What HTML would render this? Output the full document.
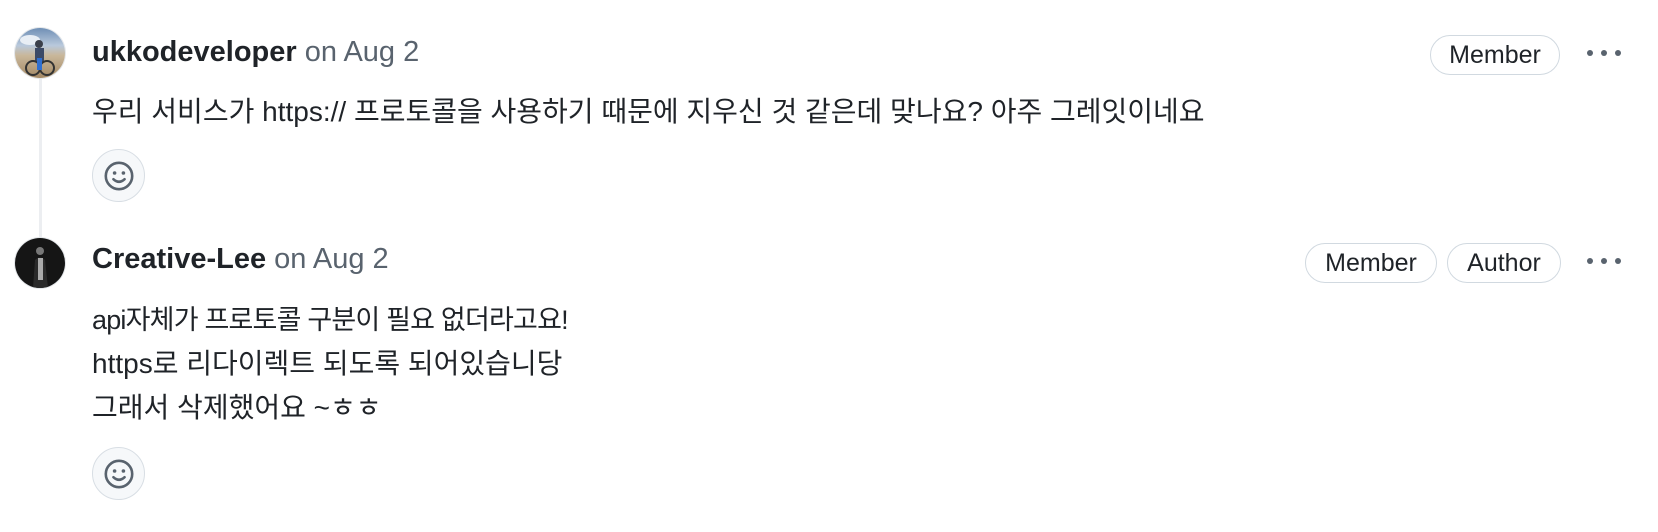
<!DOCTYPE html>
<html><head><meta charset="utf-8"><style>
html,body{margin:0;padding:0;background:#fff;width:1658px;height:532px;overflow:hidden;position:relative;font-family:"Liberation Sans","Noto Sans CJK KR",sans-serif;color:#1f2328}
.line{position:absolute;left:39px;top:79px;width:3px;height:160px;background:#eceef1}
.av{position:absolute;left:15px;width:50px;height:50px;border-radius:50%;overflow:hidden;box-shadow:0 0 0 1px #e4e7ea}
.name{position:absolute;left:92px;font-size:29px;line-height:1;white-space:nowrap}
.name b{font-weight:bold}
.name span{color:#59636e}
.txt{position:absolute;left:92px;font-size:27px;letter-spacing:-0.8px;white-space:nowrap}
.l2{font-size:28px;letter-spacing:0}
.smile{position:absolute;left:92px;width:51px;height:51px;border-radius:50%;border:1px solid #d8dee4;background:#f6f8fa;display:flex;align-items:center;justify-content:center}
.badge{position:absolute;height:38px;border:1px solid #d1d9e0;border-radius:20px;font-size:25px;display:flex;align-items:center;justify-content:center;box-sizing:content-box}
.dots{position:absolute;left:1587px;width:34px;height:6px;display:flex;justify-content:space-between}
.dots i{width:6px;height:6px;border-radius:50%;background:#59636e;display:block}
</style></head><body>
<div class="line"></div>

<div class="av" style="top:28px;background:linear-gradient(#6f8fb5 0%,#b9c9dc 35%,#c9b79a 55%,#a38864 100%)">
<svg width="50" height="50" viewBox="0 0 50 50"><ellipse cx="15" cy="12" rx="10" ry="5" fill="#e8eef5"/><circle cx="24" cy="16" r="4" fill="#3a3f4a"/><rect x="20" y="20" width="9" height="14" fill="#3c4a66"/><circle cx="18" cy="40" r="7" fill="none" stroke="#333" stroke-width="2"/><circle cx="32" cy="40" r="7" fill="none" stroke="#333" stroke-width="2"/><rect x="22" y="30" width="5" height="12" fill="#2f6fd0"/></svg>
</div>
<div class="name" style="top:38px"><b>ukkodeveloper</b> <span>on Aug 2</span></div>
<div class="txt" style="top:91px;line-height:42px;font-size:28px;letter-spacing:0">우리 서비스가 https:// 프로토콜을 사용하기 때문에 지우신 것 같은데 맞나요? 아주 그레잇이네요</div>
<div class="smile" style="top:149px"><svg width="32" height="32" viewBox="0 0 16 16"><circle cx="8" cy="8" r="6.6" fill="none" stroke="#59636e" stroke-width="1.3"/><circle cx="5.8" cy="6.5" r="0.9" fill="#59636e"/><circle cx="10.2" cy="6.5" r="0.9" fill="#59636e"/><path d="M5.2 9.6 Q8 12.2 10.8 9.6" fill="none" stroke="#59636e" stroke-width="1.3" stroke-linecap="round"/></svg></div>

<div class="badge" style="left:1430px;top:35px;width:128px">Member</div>
<div class="dots" style="top:50px"><i></i><i></i><i></i></div>

<div class="av" style="top:238px;background:#151515">
<svg width="50" height="50" viewBox="0 0 50 50"><circle cx="25" cy="13" r="4" fill="#777"/><path d="M18 50 L20 22 Q25 17 30 22 L33 50 Z" fill="#2a2a2a"/><rect x="23" y="20" width="5" height="22" fill="#aaa"/></svg>
</div>
<div class="name" style="top:245px"><b>Creative-Lee</b> <span>on Aug 2</span></div>
<div class="txt" style="top:299px;line-height:43px">api자체가 프로토콜 구분이 필요 없더라고요!<br><span class="l2">https로 리다이렉트 되도록 되어있습니당</span><br><span class="l2">그래서 삭제했어요 ~ㅎㅎ</span></div>
<div class="smile" style="top:447px"><svg width="32" height="32" viewBox="0 0 16 16"><circle cx="8" cy="8" r="6.6" fill="none" stroke="#59636e" stroke-width="1.3"/><circle cx="5.8" cy="6.5" r="0.9" fill="#59636e"/><circle cx="10.2" cy="6.5" r="0.9" fill="#59636e"/><path d="M5.2 9.6 Q8 12.2 10.8 9.6" fill="none" stroke="#59636e" stroke-width="1.3" stroke-linecap="round"/></svg></div>

<div class="badge" style="left:1305px;top:243px;width:130px">Member</div>
<div class="badge" style="left:1447px;top:243px;width:112px">Author</div>
<div class="dots" style="top:258px"><i></i><i></i><i></i></div>
</body></html>
